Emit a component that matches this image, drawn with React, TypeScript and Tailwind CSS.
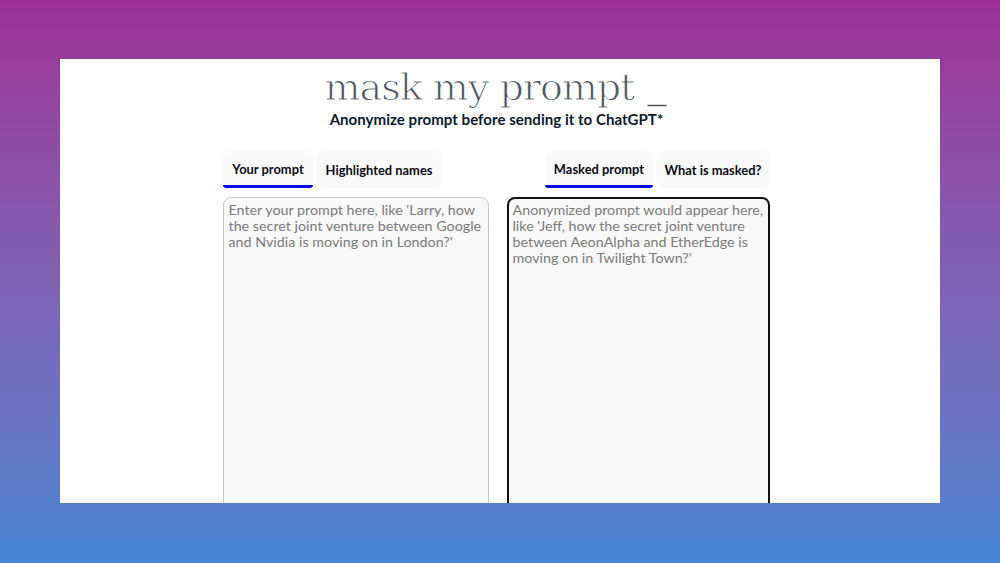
import React from 'react';

const font = { fontFamily: 'Lato, sans-serif' };

const Tab: React.FC<{ label: string; active?: boolean; width: string }> = ({ label, active, width }) => (
  <div className={`${width} h-[37px] relative rounded-lg bg-[#f9f9f9] flex items-center justify-center pt-[3px] pl-[1px] text-[12.9px] font-bold text-[#0b0b14]`}>
    <span className={active ? '-mt-[2px]' : ''}>{label}</span>
    {active && <div className="absolute left-0 right-0 bottom-0 h-[3px] rounded-b-md bg-[#0a0ae6]" />}
  </div>
);

export default function App() {
  return (
    <div
      className="w-[1000px] h-[563px] overflow-hidden pt-[59px] px-[60px] bg-gradient-to-b from-[#9c2f96] to-[#4285d2]"
      style={font}
    >
      <div className="w-[880px] h-[444px] bg-white overflow-hidden flex flex-col items-center">
        {/* Header */}
        <h1
          className="ml-[-10px] mt-[3px] h-[44px] leading-[44px] text-[38px] tracking-[-1px] text-[#4a5560] whitespace-pre [-webkit-text-stroke:1px_white]"
          style={{ fontFamily: '"DejaVu Serif", serif', fontWeight: 400 }}
        >
          mask my prompt <span className="ml-[2px] align-[3px] text-[#555] [-webkit-text-stroke:0]">_</span>
        </h1>
        <p className="ml-[-7px] mt-[2px] h-[22px] leading-[22px] text-[15.1px] font-bold text-[#0d1b2e]">
          Anonymize prompt before sending it to ChatGPT*
        </p>

        {/* Editors */}
        <div className="mt-[21px] ml-[-8px] flex gap-[18px]">
          <div className="w-[266px] flex flex-col gap-[9px]">
            <div className="flex gap-[3px]">
              <Tab label="Your prompt" active width="w-[90px]" />
              <Tab label="Highlighted names" width="w-[126px]" />
            </div>
            <textarea
              readOnly
              placeholder="Enter your prompt here, like 'Larry, how the secret joint venture between Google and Nvidia is moving on in London?'"
              className="w-full h-[340px] resize-none rounded-lg bg-[#f8f8f8] border border-[#c9c9c9] pl-[5px] pr-[3px] pt-[4px] text-[14.3px] leading-[16px] outline-none placeholder:text-[#7b7b7b]"
            />
          </div>
          <div className="w-[263px] flex flex-col gap-[9px]">
            <div className="flex justify-end gap-[3px]">
              <Tab label="Masked prompt" active width="w-[108px]" />
              <Tab label="What is masked?" width="w-[114px]" />
            </div>
            <textarea
              readOnly
              placeholder="Anonymized prompt would appear here, like 'Jeff, how the secret joint venture between AeonAlpha and EtherEdge is moving on in Twilight Town?'"
              className="w-full h-[340px] resize-none rounded-lg bg-[#f8f8f8] border-2 border-[#111111] pl-[4px] pr-[2px] pt-[3px] text-[14.3px] leading-[16px] outline-none placeholder:text-[#7b7b7b]"
            />
          </div>
        </div>
      </div>
    </div>
  );
}
